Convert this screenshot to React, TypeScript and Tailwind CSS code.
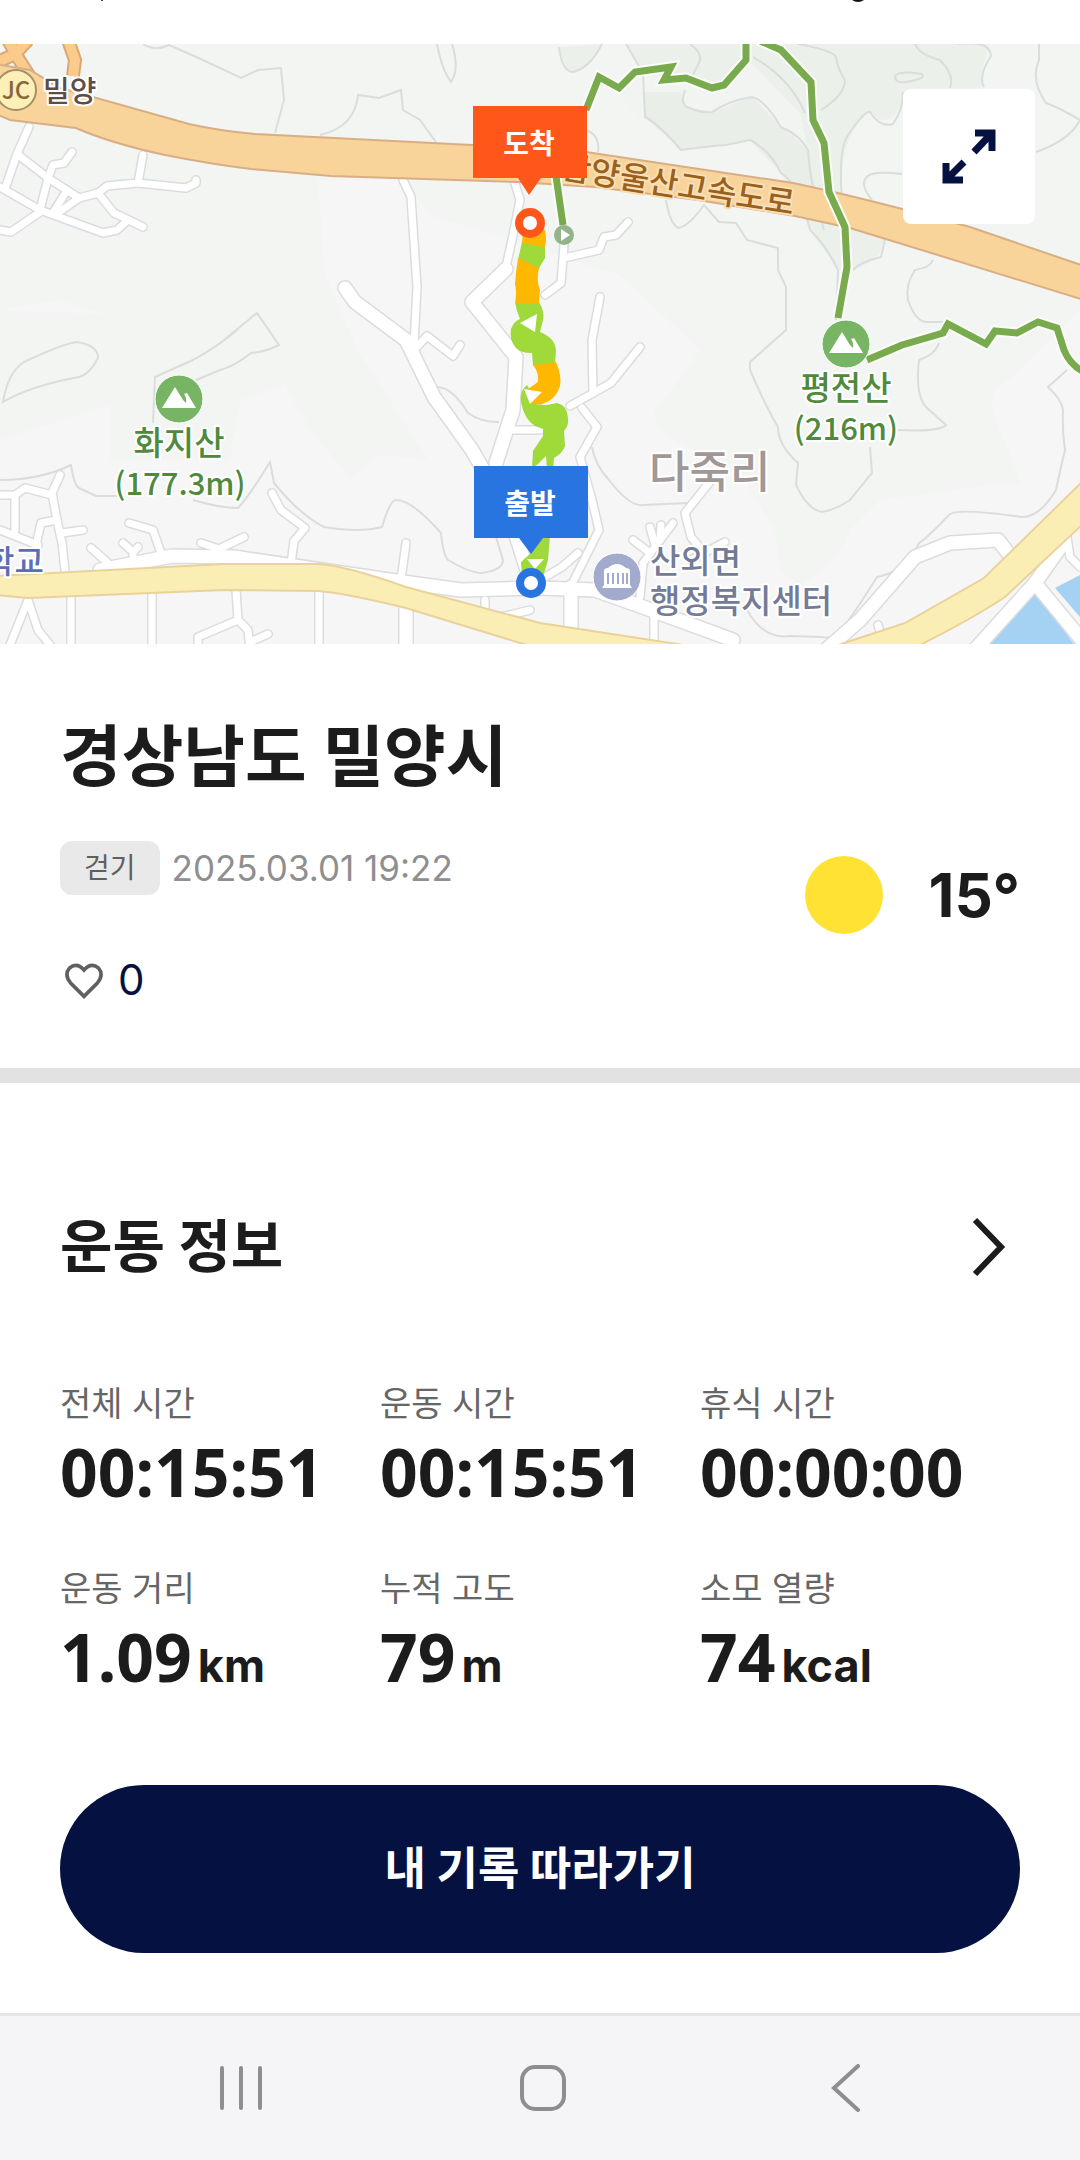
import React from "react";

const stats = [
  { label: "전체 시간", value: "00:15:51" },
  { label: "운동 시간", value: "00:15:51" },
  { label: "휴식 시간", value: "00:00:00" },
  { label: "운동 거리", value: "1.09", unit: "km" },
  { label: "누적 고도", value: "79", unit: "m" },
  { label: "소모 열량", value: "74", unit: "kcal" },
];

// Jalan kecil (putih, garis tepi abu-abu)
const smallRoads = [
  "M29 127L17 154L6 186",
  "M17 154L48 178L79 198",
  "M72 152L64 163L53 165L48 178L40 210",
  "M0 187L40 210L103 233L117 230L127 221",
  "M0 230L11 232L40 212",
  "M143 155L138 183L107 186L98 193L79 198L55 215",
  "M138 183L186 188L196 183V180",
  "M98 193L114 213L143 227",
  "M66 192L53 213",
  "M403 180L411 197L417 287L414 345",
  "M414 350L427 336L453 356L460 345",
  "M514 180L520 200L512 240L506 267",
  "M564 245L561 283L545 295",
  "M628 222L616 235L604 237L599 250L564 258",
  "M600 297L592 340L593 393",
  "M640 347L611 383L570 406",
  "M582 408L597 427L580 457L592 500L599 530L574 580",
  "M513 430H540",
  "M60 475L52 493L57 520L62 543L65 570",
  "M0 495H15L25 488L52 495",
  "M15 497V530",
  "M0 530L38 545",
  "M57 520L41 523L36 545",
  "M62 533L83 530",
  "M91 548L107 562",
  "M129 523L153 530L162 556",
  "M123 543L133 552V562M133 552L138 547",
  "M201 543L219 549V558M219 549L244 537",
  "M272 493L281 510L305 528L294 541L291 564",
  "M406 543L401 580",
  "M709 483L685 513L691 537L700 548",
  "M673 523L643 563L640 597",
  "M633 540L650 553M650 527L655 545M661 525L660 540",
  "M691 560L725 542",
  "M545 577L562 567L578 553",
  "M654 610V644",
  "M71 596V650",
  "M152 592V650",
  "M236 590L238 620L198 637V650M238 620L248 630L250 650M250 642L268 634",
  "M319 590V650",
  "M28 600L8 650M28 600L38 630L54 650",
  "M485 600V620L510 615L530 610",
  "M878 625L884 644",
  "M1067 537L1070 557L1080 567",
];

const wideRoads = [
  "M345 288L355 302L406 340L434 397L472 450L510 517L527 570L531 590",
  "M506 269L472 302L516 357L513 410L496 463",
  "M100 570L172 556L234 557L403 582L461 590L540 588L595 590L643 607L733 640",
  "M571 587V650",
  "M406 605V650",
  "M820 655L860 620L915 557L950 543L998 540L1012 558",
  "M970 655L1035 583L1062 545",
  "M1035 583L1090 650",
];

const contours = [
  "M143 44Q155 52 169 45L203 60L241 78L258 70L281 68L284 100L275 133",
  "M320 135Q355 127 358 95L379 98L401 90L403 110L420 120L436 142",
  "M437 44Q442 70 451 82Q460 70 452 44",
  "M224 340L257 313L279 345Q265 352 251 353Q235 366 220 370L196 380",
  "M237 330Q220 345 193 360L155 377L153 423",
  "M3 402Q8 372 24 362Q60 345 76 342Q98 345 98 358Q90 374 79 377Q30 386 3 402Z",
  "M0 480Q40 480 71 465Q74 485 79 488L96 496H117",
  "M193 500Q220 508 238 508Q250 495 270 462L274 483Q300 515 324 527Q360 533 382 527Q390 500 396 500Q412 500 441 533Q443 555 448 560Q470 573 482 573Q503 570 503 560L496 537",
  "M437 387Q452 387 468 413Q480 422 499 422",
  "M626 44L643 73L645 117Q660 125 681 150Q720 145 726 145L750 140Q770 150 781 173Q800 185 810 230Q826 245 838 270L836 320",
  "M685 90Q680 103 687 107Q700 113 712 112Q730 100 752 97Q765 100 781 127Q800 135 808 150Q810 185 824 230",
  "M690 44Q705 55 698 65L690 80M753 57Q790 78 805 113",
  "M798 44Q832 50 836 57Q838 70 845 80Q845 95 821 110",
  "M915 44Q920 55 940 60Q955 75 950 88",
  "M895 76Q900 70 922 74Q925 78 915 80Q895 86 895 76Z",
  "M958 44Q990 40 991 56Q978 76 984 87",
  "M1039 44V60Q1030 80 1046 103Q1060 108 1080 120Q1070 140 1036 152",
  "M853 270Q860 262 881 257L885 240M842 200Q838 150 848 135Q865 110 870 112Q880 128 893 124Q903 110 903 92",
  "M902 174Q870 170 866 178Q860 185 872 200",
  "M559 47Q562 72 573 72Q590 68 602 44M586 130Q600 135 598 152",
  "M666 200Q670 225 679 228Q690 225 704 205L719 222L736 223L747 240L778 248V270L786 287V330L750 362V370Q765 405 778 427Q778 445 798 463L796 485Q808 510 822 512Q835 510 850 500L872 473L870 447",
  "M933 260Q930 268 915 270Q905 285 908 300Q915 320 925 322H943",
  "M939 343Q935 355 919 360Q915 395 926 407L946 425Q940 432 898 430",
  "M1067 370L1048 387Q1062 400 1063 410Q1062 430 1065 450Q1060 470 1056 490Q1040 517 1022 517Q960 508 950 514Q925 540 919 543Q905 572 877 577Q850 620 843 627Q835 640 822 637L790 636Q764 640 747 610",
  "M592 447Q595 465 609 480Q630 507 643 505L688 503",
];

const trails = [
  "M586 110L599 77L619 88L635 72L671 67L664 80L686 78L712 88L724 85L746 60V40",
  "M758 40L781 50L811 82L813 120L824 143L829 192L845 227L847 267L838 318",
  "M867 360L902 345L943 333L948 324L986 344L995 331L1017 333L1038 322L1057 328L1064 350Q1070 365 1084 372",
  "M556 176L563 225",
];

const MountainIcon = ({ x, y }: { x: number; y: number }) => (
  <g transform={`translate(${x} ${y})`}>
    <circle r="24" fill="#77b564" stroke="#fff" strokeWidth="1" />
    <path d="M-17 9L-4 -12L4 1L7 4Q8 -1 5 -5L8 -6L17 9Z" fill="#fff" />
  </g>
);

const RouteMap = () => (
  <svg
    viewBox="0 44 1080 600"
    className="block w-full"
    style={{ fontFamily: '"Noto Sans CJK KR", sans-serif' }}
    role="img"
    aria-label="이동 경로 지도"
  >
    <rect y="44" width="1080" height="600" fill="#f6f6f6" />
    {/* Area hijau */}
    <g fill="#f2f5f2">
      <path d="M0 44H1080V310L1010 380Q980 390 1000 430L1022 485L990 485L880 500L850 530Q840 560 800 585L780 570L775 530L735 465Q650 440 655 410Q680 380 700 350L620 275L430 215L405 180H240V200L225 260Q220 300 130 322L60 300L0 310Z" />
      <path d="M240 180H318L325 275L360 355Q390 400 428 460L380 455L350 478L310 430L285 385L240 400L230 460H110V405L0 440V310L130 315L210 290Z" />
    </g>
    <g fill="#ebf0eb">
      <path d="M626 44H990Q978 76 984 87L950 95Q930 130 903 92Q895 135 870 112Q838 135 842 200L872 200L885 240Q880 262 853 270L838 270L810 230L781 173L750 140L681 150L645 117L643 73Z" />
      <path d="M559 47Q562 72 573 72Q590 68 602 44Z" />
    </g>
    <path d="M646 92L685 90Q680 103 712 112Q730 100 752 97Q765 100 781 127L808 150L818 200L781 173L750 140L726 145L681 150L645 117Z" fill="#e9eee9" />
    <path d="M610 85L640 75L690 80L712 92L750 62L800 113L808 148L781 127L752 97L712 112L685 107L680 92L645 92L640 120Z" fill="#f1f4f1" />
    <g fill="none" stroke="#dadddb" strokeWidth="2">
      {contours.map((d) => (
        <path key={d} d={d} />
      ))}
    </g>
    {/* Air */}
    <path d="M1034 590L986 644H1074ZM1080 575L1055 588L1080 617Z" fill="#a5d1f2" />
    {/* Jalan */}
    <g fill="none" strokeLinecap="round" strokeLinejoin="round">
      <g stroke="#dcdcdf">
        {smallRoads.map((d) => (
          <path key={d} d={d} strokeWidth="10" />
        ))}
        {wideRoads.map((d) => (
          <path key={d} d={d} strokeWidth="16" />
        ))}
      </g>
      <g stroke="#fff">
        {smallRoads.map((d) => (
          <path key={d} d={d} strokeWidth="7" />
        ))}
        {wideRoads.map((d) => (
          <path key={d} d={d} strokeWidth="13" />
        ))}
      </g>
    </g>
    <g fill="#fbeeb4" stroke="#e9d29b" strokeWidth="2">
      <path d="M-4 576L224 564H320Q350 567 406 587L540 623L690 646H530L406 608Q340 592 317 591L224 590L28 598L-4 595Z" />
      <path d="M835 646L905 623L984 578L1084 480V523L1005 597Q970 620 918 646Z" />
    </g>
    {/* Jalan tol */}
    <g fill="none">
      <path d="M-2 62L15 54L28 40M8 40L18 58L32 80M68 40L75 60L73 76" stroke="#d9a878" strokeWidth="14" />
      <path d="M-2 62L15 54L28 40M8 40L18 58L32 80M68 40L75 60L73 76" stroke="#fbcb8c" strokeWidth="10" />
    </g>
    <path
      d="M-4 64L30 70L60 88L100 99L189 124Q220 131 255 134L472 145L586 152L793 183Q860 197 970 227L1084 266V300L850 228L795 216L698 200L595 187L517 182L331 176L251 169Q210 164 165 155Q110 143 76 128L10 120L-4 114Z"
      fill="#f8d49b"
      stroke="#d9ae84"
      strokeWidth="2"
    />
    {/* Jalur pendakian */}
    <g fill="none" strokeLinejoin="miter">
      {trails.map((d) => (
        <path key={d} d={d} stroke="#fbfdf8" strokeWidth="11" />
      ))}
      {trails.map((d) => (
        <path key={d} d={d} stroke="#7aaa4e" strokeWidth="7" />
      ))}
    </g>
    <circle cx="564" cy="235" r="10" fill="#93b48a" />
    <path d="M561 229L570 235L561 241Z" fill="#fff" />

    {/* Nama tempat */}
    <g stroke="#fff" strokeWidth="4" strokeLinejoin="round" paintOrder="stroke" fontWeight="500" fontSize="33">
      <text x="43" y="102" fontSize="29" fill="#5d4c48">밀양</text>
      <text x="560" y="178" fontSize="32" fill="#9a611c" stroke="#f9dfb6" transform="rotate(9 560 178)">함양울산고속도로</text>
      <g fill="#4f8a3c" textAnchor="middle">
        <text x="179" y="455">화지산</text>
        <text x="180" y="495" fontSize="31">(177.3m)</text>
        <text x="846" y="400">평전산</text>
        <text x="846" y="440" fontSize="31">(216m)</text>
      </g>
      <text x="649" y="488" fontSize="44" fill="#9f9896">다죽리</text>
      <g fill="#737b97">
        <text x="650" y="573">산외면</text>
        <text x="650" y="613">행정복지센터</text>
      </g>
      <text x="44" y="573" fontSize="32" textAnchor="end" fill="#5a6eb8">학교</text>
    </g>
    <circle cx="16" cy="90" r="20" fill="#fcf0b8" stroke="#a68f68" strokeWidth="2" />
    <text x="16" y="99" textAnchor="middle" fontSize="24" fontWeight="500" fill="#86683c">JC</text>
    <MountainIcon x={179} y={399} />
    <MountainIcon x={846} y={344} />
    <circle cx="617" cy="577" r="24" fill="#a2abce" stroke="#fff" strokeWidth="1" />
    <path d="M604 585V571Q604 568 608 568Q617 560 626 568Q630 568 630 571V585L632 588H602Z" fill="#fff" />
    <path d="M608 573V584M613 573V584M618 573V584M623 573V584M627 573V584" stroke="#a2abce" strokeWidth="2" />

    {/* Rute berwarna sesuai kecepatan */}
    <g fill="#9fd93a">
      <path d="M522 242L545 246L545 258L538 270L518 260Z" />
      <path d="M515 302H539Q545 312 543 320L540 332Q555 338 556 350L555 365H533L532 353Q520 353 516 348Q509 340 511 329Q514 321 520 319Q516 310 515 302Z" />
      <path d="M527 385Q519 391 521 402Q524 419 535 426L543 429V436L533 451L532 468L538 464L546 456L547 470H553L554 458Q563 453 565 446L564 431Q569 426 568 418Q567 405 557 403L547 405L538 405Z" />
      <path d="M541 536H550L548 560L543 577H522L521 562L531 553Z" />
    </g>
    <g fill="#ffb800">
      <path d="M523 230H545Q547 240 545 247L522 243Z" />
      <path d="M518 258L539 268Q536 280 540 290L539 303H515Q517 292 515 284Q516 270 518 258Z" />
      <path d="M533 365L556 362Q562 376 560 386Q557 396 549 401L540 405L530 402L528 389L538 382Q539 372 533 365Z" />
    </g>
    <g fill="#fff">
      <path d="M520 323L537 314L535 332Z" />
      <path d="M524 389L542 392L530 404Z" />
      <path d="M527 559H544L535 569Z" />
    </g>
    <g strokeWidth="8" fill="#fff">
      <circle cx="530" cy="223" r="11" stroke="#ff5719" />
      <circle cx="531" cy="583" r="11" stroke="#2874e0" />
    </g>
    <path d="M473 106H587V178H541L529 195L518 178H473Z" fill="#ff5719" />
    <path d="M474 466H588V538H543L531 554L519 538H474Z" fill="#2874e0" />
    <g fill="#fff" fontSize="28" fontWeight="700" textAnchor="middle">
      <text x="529" y="154">도착</text>
      <text x="530" y="514">출발</text>
    </g>
  </svg>
);

const App = () => {
  return (
    <div className="flex min-h-screen flex-col bg-white font-['Inter','Noto_Sans_CJK_KR',sans-serif] text-[#1c1c1c]">
      {/* Sisa judul yang tergulung ke atas */}
      <header className="h-11">
        <svg viewBox="0 0 1080 44" className="block w-full" aria-hidden="true">
          <path d="M101 0H103V1H101Z" fill="#444" />
          <path d="M852 0H864Q858 4 852 0Z" fill="#111" />
        </svg>
      </header>

      <main className="flex-1">
        <div className="relative">
          <RouteMap />
          <button
            type="button"
            aria-label="지도 확대"
            className="absolute top-[45px] right-[45px] flex h-[135px] w-[132px] items-center justify-center rounded-lg bg-white"
          >
            <svg viewBox="0 0 56 56" className="h-14 w-14" fill="none" stroke="#051241" strokeWidth="7">
              <path d="M34 4H51V22M50 5L33 23" />
              <path d="M5 34V51H22M6 50L23 33" />
            </svg>
          </button>
        </div>

        {/* Informasi lokasi */}
        <section className="px-15 pt-[65px] pb-[63px]">
          <h1 className="text-[67px] leading-[96px] font-bold">경상남도 밀양시</h1>
          <div className="flex items-center justify-between">
            <div className="pt-9">
              <div className="flex items-center gap-3">
                <span className="rounded-xl bg-[#e9e9e9] px-6 text-[28px] leading-[54px] text-[#5f5f5f]">걷기</span>
                <time className="text-[35px] leading-[54px] text-[#8f8f8f]">2025.03.01 19:22</time>
              </div>
              <button type="button" aria-label="좋아요" className="mt-[60px] flex items-center gap-3 pl-0.5 text-[42px] leading-[50px] text-[#051241]">
                <svg viewBox="0 0 48 44" className="h-10 w-11" fill="none" stroke="#606060" strokeWidth="4">
                  <path d="M24 40L9 25Q2 16 8 9Q16 2 24 11Q32 2 40 9Q46 16 39 25Z" />
                </svg>
                0
              </button>
            </div>
            <div className="flex items-center gap-[46px] pb-5">
              <span className="h-[78px] w-[78px] rounded-full bg-[#ffe234]" />
              <span className="text-[60px] leading-[70px] font-bold">15°</span>
            </div>
          </div>
        </section>

        <hr className="h-[15px] border-0 bg-[#e2e2e2]" />

        {/* Informasi olahraga */}
        <section className="px-15 pt-[122px] pb-15">
          <div className="flex items-center justify-between">
            <h2 className="text-[57px] leading-[84px] font-bold">운동 정보</h2>
            <a href="#detail" aria-label="운동 정보 자세히 보기" className="pr-[14px]">
              <svg viewBox="0 0 34 60" className="h-15 w-[34px]" fill="none" stroke="#1c1c1c" strokeWidth="6">
                <path d="M3 3L29 30L3 57" />
              </svg>
            </a>
          </div>
          <dl className="mt-[90px] grid grid-cols-3 gap-y-[51px]">
            {stats.map((item) => (
              <div key={item.label}>
                <dt className="text-[34px] leading-[50px] text-[#666666]">{item.label}</dt>
                <dd className="flex items-baseline gap-1.5 font-['Noto_Sans',sans-serif] text-[66px] leading-[84px] font-bold">
                  {item.value}
                  {item.unit && (
                    <span className="font-['Inter',sans-serif] text-[45px] font-bold">{item.unit}</span>
                  )}
                </dd>
              </div>
            ))}
          </dl>
          <button type="button" className="mt-[77px] h-[168px] w-full rounded-full bg-[#051241] text-[45px] font-bold text-white">
            내 기록 따라가기
          </button>
        </section>
      </main>

      <nav className="grid h-[147px] grid-cols-3 items-center justify-items-center border-t-[3px] border-[#e6e6e6] bg-[#f5f5f8] pr-[84px] pl-[90px]">
        <button type="button" aria-label="최근 앱">
          <svg viewBox="0 0 48 48" className="h-12 w-12" stroke="#8e8e8e" strokeWidth="4" strokeLinecap="round">
            <path d="M5 4V44M24 4V44M43 4V44" />
          </svg>
        </button>
        <button type="button" aria-label="홈">
          <svg viewBox="0 0 48 48" className="h-12 w-12" fill="none" stroke="#8e8e8e" strokeWidth="4">
            <rect x="3" y="3" width="42" height="42" rx="13" />
          </svg>
        </button>
        <button type="button" aria-label="뒤로">
          <svg viewBox="0 0 48 48" className="h-12 w-12" fill="none" stroke="#8e8e8e" strokeWidth="4" strokeLinecap="round">
            <path d="M37 2L13 24L37 46" />
          </svg>
        </button>
      </nav>
    </div>
  );
};

export default App;
